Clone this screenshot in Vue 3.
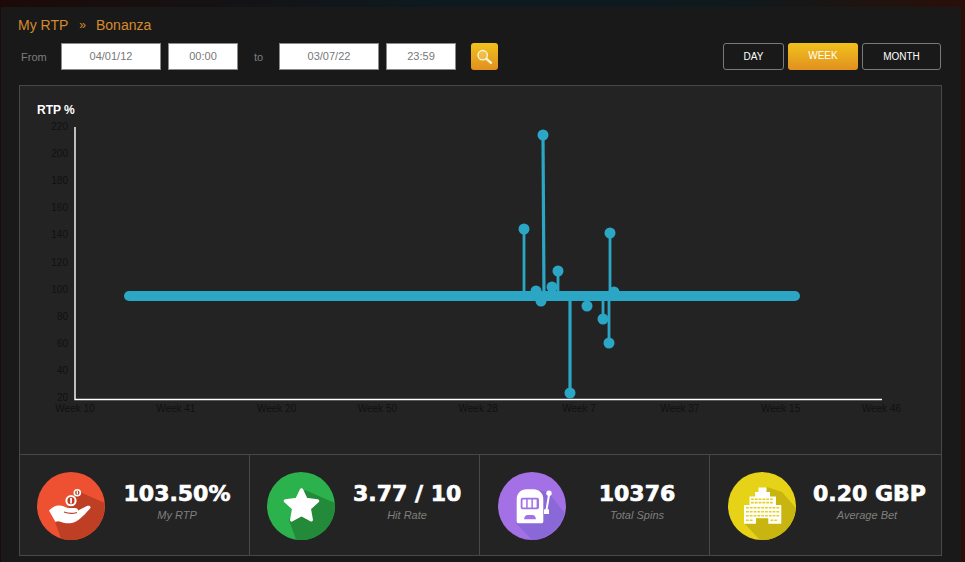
<template>
  <div class="page">
    <div class="panel">
      <div class="crumbs">
        <span>My RTP</span>
        <span class="crumbs__sep">»</span>
        <span>Bonanza</span>
      </div>

      <div class="filters">
        <span class="filters__label filters__label--from">From</span>
        <div class="field field--date">04/01/12</div>
        <div class="field field--time">00:00</div>
        <span class="filters__label filters__label--to">to</span>
        <div class="field field--date">03/07/22</div>
        <div class="field field--time">23:59</div>
        <button class="search">
          <svg width="17" height="17" viewBox="0 0 17 17">
            <circle cx="6.7" cy="7.200" r="4.700" fill="#f7e3a8" fill-opacity=".3" stroke="#fdf3d6" stroke-width="1.400" />
            <path d="M10.500 10.800l4.500 4" stroke="#fdf3d6" stroke-width="2.400" stroke-linecap="round" />
          </svg>
        </button>
        <div class="ranges">
          <button v-for="r in ranges" :key="r.label" class="range" :class="{ 'range--on': r.on }" :style="{ width: r.width + 'px' }">{{ r.label }}</button>
        </div>
      </div>

      <div class="board">
        <div class="chart">
          <div class="chart__title">RTP %</div>
          <div class="plot">
            <span v-for="t in yTicks" :key="t.label" class="tick tick--y" :style="{ top: t.top + 'px' }">{{ t.label }}</span>
            <span v-for="t in xTicks" :key="t.label" class="tick tick--x" :style="{ left: t.left + 'px' }">{{ t.label }}</span>
            <svg class="plot__svg" width="860" height="280" viewBox="0 0 860 280">
              <path d="M38 0V272.500H845" fill="none" stroke="#fff" stroke-width="1.400" />
              <g transform="translate(-37 -127)">
                <path v-for="(s, i) in spikes" :key="i" :d="`M${s[0]} 296L${s[1]} ${s[2]}`" stroke="#2ba6c4" :stroke-width="s[3]" />
                <line x1="129" y1="296" x2="795" y2="296" stroke="#2ba6c4" stroke-width="10" stroke-linecap="round" />
                <circle v-for="(d, i) in dots" :key="i" :cx="d[0]" :cy="d[1]" r="5.500" fill="#2ba6c4" />
              </g>
            </svg>
          </div>
        </div>

        <div class="stats">
          <div v-for="s in stats" :key="s.label" class="stat">
            <svg class="stat__icon" width="68" height="68" viewBox="0 0 68 68">
              <circle cx="34" cy="34" r="34" :fill="s.color" />
              <path :d="s.shadow" :fill="s.dark" />
              <g v-if="s.icon === 'hand'">
                <path d="M12 38.500C15 35 19 33 23 33.500C27 34 29 36 33 36H38C40 36 41 37 41 38.500L50 34C52.500 33 54.500 34.500 53 36.500C49 41 44 47 38 50C34 52 28 51.500 24 50C22 49 20 49 18.500 50z" fill="#fff" />
                <path d="M27 40C31 41.500 36 41.800 40 40.500" fill="none" :stroke="s.dark" stroke-width="1.300" />
                <circle cx="34" cy="28.700" r="4.600" :fill="s.dark" stroke="#fff" stroke-width="2" />
                <circle cx="40.300" cy="20.700" r="3" :fill="s.dark" stroke="#fff" stroke-width="1.600" />
                <path d="M33.200 26h1.700v5.400h-1.700zM39.700 19h1.300v3.400h-1.300z" fill="#fff" />
              </g>
              <polygon v-else-if="s.icon === 'star'" points="34.500,18 39,27.500 50.500,29 42.200,36.500 44.200,47.800 34.500,42.500 24.800,47.800 26.800,36.500 18.500,29 30,27.500" fill="#fff" stroke="#fff" stroke-width="3.500" stroke-linejoin="round" />
              <g v-else-if="s.icon === 'slot'">
                <path d="M18.700 27C18.700 21.500 23 17.300 28.500 17.300H35.500C41 17.300 45.300 21.500 45.300 27V49.500C45.300 50.600 44.400 51.300 43.500 51.300H20.500C19.600 51.300 18.700 50.600 18.700 49.500z" fill="#fff" />
                <rect x="22.700" y="25.700" width="18.300" height="11.600" rx="2" :fill="s.color" />
                <path d="M24.500 27.500h3.700v8h-3.700zM29.700 27.500h3.700v8h-3.700zM34.900 27.500h3.700v8h-3.700z" fill="#fff" />
                <path d="M26 47.200C26.700 44 27.500 43 29.500 43H34.500C36.500 43 37.300 44 38 47.200z" :fill="s.color" />
                <circle cx="51" cy="21.300" r="2.700" fill="#fff" />
                <path d="M51 23L48.500 38" stroke="#fff" stroke-width="2" fill="none" />
                <rect x="46" y="37.300" width="5" height="4.800" rx=".6" fill="#fff" />
              </g>
              <g v-else>
                <path d="M16 51.700V33H21.500V24.500H27V20H30.500V15.500H38.500V20H42V24.500H48V33H53.300V51.700H40.300V46.300H28V51.700z" fill="#fff" />
                <path :d="windows" :fill="s.color" />
              </g>
            </svg>
            <div class="stat__body">
              <div class="stat__value">{{ s.value }}</div>
              <div class="stat__label">{{ s.label }}</div>
            </div>
          </div>
        </div>
      </div>
    </div>
  </div>
</template>

<script setup>
const ranges = [
  { label: 'DAY', width: 61 },
  { label: 'WEEK', width: 70, on: true },
  { label: 'MONTH', width: 79 }
]

const yLabels = [220, 200, 180, 160, 140, 120, 100, 80, 60, 40, 20]
const yTicks = yLabels.map((v, i) => ({ label: v, top: i * 27.1 - 6 }))

const xLabels = ['Week 10', 'Week 41', 'Week 20', 'Week 50', 'Week 28', 'Week 7', 'Week 37', 'Week 15', 'Week 46']
const xTicks = xLabels.map((label, i) => ({ label, left: i * 100.8 + 38 }))

// x at base, x at tip, y at tip, stroke width
const spikes = [
  [524, 524, 229, 2.8],
  [544, 543, 135, 3.2],
  [558, 558, 271, 2.8],
  [570, 570, 393, 3.2],
  [603, 603, 318, 2.8],
  [609, 609, 343, 2.8],
  [610, 610, 233, 2.8]
]

const dots = [
  [524, 229], [543, 135], [558, 271], [536, 291], [541, 301], [552, 287],
  [570, 393], [587, 306], [603, 319], [609, 343], [610, 233], [614, 292]
]

const stats = [
  {
    value: '103.50%', label: 'My RTP', color: '#ee5032', dark: '#bf3f25', icon: 'hand',
    shadow: 'M43 20L67.700 31A34 34 0 0 1 24 66.500L18 50z'
  },
  {
    value: '3.77 / 10', label: 'Hit Rate', color: '#2bb24c', dark: '#238a3a', icon: 'star',
    shadow: 'M38 18L67.800 31A34 34 0 0 1 29 67.600L22 48z'
  },
  {
    value: '10376', label: 'Total Spins', color: '#a470e6', dark: '#8a68d8', icon: 'slot',
    shadow: 'M40 18L50 20L66.500 41A34 34 0 0 1 34 68L18 51z'
  },
  {
    value: '0.20 GBP', label: 'Average Bet', color: '#e6d216', dark: '#c9b50f', icon: 'bank',
    shadow: 'M39 15L54 20L67.900 36A34 34 0 0 1 32 68L16 51z'
  }
]

// building windows: start x, y, count
const rows = [
  [23, 26.5, 6], [23, 29.8, 6],
  [18, 35, 9], [18, 39, 9], [18, 43, 9],
  [18, 47.5, 2], [42.5, 47.5, 2]
]
const windows = rows
  .map(([x, y, n]) => {
    let d = ''
    for (let i = 0; i < n; i++) {
      d += `M${x + i * 3.8} ${y}h2.800v1.600h-2.800z`
    }
    return d
  })
  .join('')
</script>

<style scoped>
.page {
  width: 965px;
  height: 562px;
  box-sizing: border-box;
  padding-top: 7px;
  background: linear-gradient(90deg, #1c0a08, #0d1a20 45%, #0e1a1e 75%, #2a0f08);
  font-family: "Liberation Sans", Arial, sans-serif;
  overflow: hidden;
}
.panel {
  height: 555px;
  margin: 0 4px 0 1px;
  box-sizing: border-box;
  padding: 10px 19px 0 16px;
  background: #191919;
}
.crumbs {
  display: flex;
  align-items: center;
  height: 15px;
  margin-left: 1px;
  font-size: 14px;
  color: #d68a2c;
}
.crumbs__sep {
  margin: 0 10px 0 11px;
  font-size: 12px;
}
.filters {
  display: flex;
  align-items: center;
  margin-top: 11px;
  height: 27px;
}
.filters__label {
  font-size: 11px;
  color: #7d7d7d;
}
.filters__label--from {
  width: 44px;
  padding-left: 4px;
  box-sizing: border-box;
}
.filters__label--to {
  width: 41px;
  text-align: center;
}
.field {
  height: 27px;
  box-sizing: border-box;
  border: 1px solid #8a8a8a;
  background: #fff;
  color: #777;
  font-size: 11px;
  line-height: 25px;
  text-align: center;
}
.field--date {
  width: 100px;
  margin-right: 7px;
}
.field--time {
  width: 70px;
}
.search {
  width: 27px;
  height: 27px;
  margin-left: 15px;
  padding: 0;
  border: 0;
  border-radius: 3px;
  background: linear-gradient(#f2c21c, #e0901f);
  display: flex;
  align-items: center;
  justify-content: center;
}
.ranges {
  display: flex;
  gap: 4px;
  margin-left: auto;
  margin-right: 1px;
}
.range {
  height: 27px;
  padding: 0;
  box-sizing: border-box;
  border: 1px solid #7a7a7a;
  border-radius: 3px;
  background: transparent;
  color: #fff;
  font-family: inherit;
  font-size: 10px;
}
.range--on {
  border: 0;
  padding-bottom: 2px;
  background: linear-gradient(#f2c21c, #e0901f);
}
.board {
  margin: 15px 0 0 2px;
  border: 1px solid #484848;
  background: #232323;
}
.chart {
  height: 369px;
  border-bottom: 1px solid #484848;
  padding: 17px 0 0 17px;
  box-sizing: border-box;
}
.chart__title {
  font-size: 12px;
  font-weight: 700;
  color: #fff;
  line-height: 14px;
}
.plot {
  position: relative;
  margin-top: 10px;
  height: 300px;
}
.plot__svg {
  position: absolute;
  left: 0;
  top: 0;
}
.tick {
  position: absolute;
  font-size: 10px;
  line-height: 12px;
  color: #111;
}
.tick--y {
  left: 0;
  width: 31px;
  text-align: right;
}
.tick--x {
  top: 276px;
  width: 60px;
  margin-left: -30px;
  text-align: center;
}
.stats {
  display: flex;
  height: 100px;
}
.stat {
  flex: 1;
  max-width: 230px;
  display: flex;
  align-items: flex-start;
  padding: 17px 0 0 17px;
  box-sizing: border-box;
  border-left: 1px solid #484848;
}
.stat:first-child {
  flex: none;
  width: 229px;
  border-left: 0;
}
.stat:nth-child(n + 3) {
  padding-left: 18px;
}
.stat:last-child {
  max-width: none;
}
.stat__icon {
  flex: none;
}
.stat__body {
  text-align: center;
  width: 108px;
  margin: 10px 0 0 18px;
}
.stat:nth-child(n + 3) .stat__body {
  margin-left: 17px;
}
.stat__value {
  font-family: "DejaVu Sans", sans-serif;
  font-size: 22px;
  font-weight: 700;
  line-height: 24px;
  color: #fff;
  white-space: nowrap;
  -webkit-text-stroke: 0.7px #fff;
}
.stat__label {
  margin-top: 3px;
  font-size: 11px;
  font-style: italic;
  color: #7f7f7f;
}
</style>
